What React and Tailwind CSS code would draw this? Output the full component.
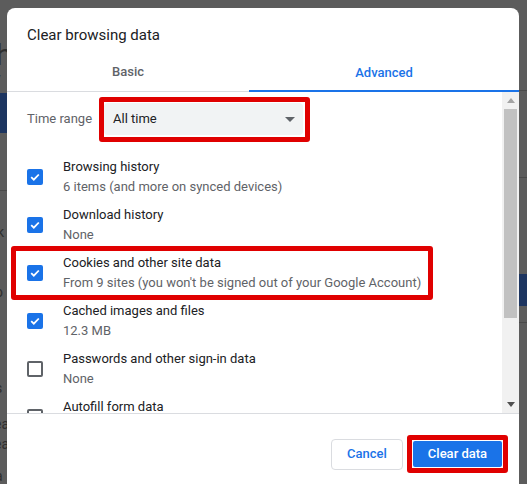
import React from "react";

function Check({ on }) {
  if (on) {
    return (
      <div className="w-4 h-4 rounded-[2px] bg-[#1a73e8] flex items-center justify-center shrink-0">
        <svg width="12" height="12" viewBox="0 0 12 12">
          <path d="M2.2 6.2 L4.8 8.7 L9.8 3.5" fill="none" stroke="white" strokeWidth="1.8" />
        </svg>
      </div>
    );
  }
  return <div className="w-4 h-4 rounded-[2px] border-2 border-[#5f6368] shrink-0" />;
}

function Row({ on, title, sub, highlight }) {
  return (
    <div className="relative flex items-center h-10 shrink-0">
      <div className="w-[36px] flex items-center">
        <Check on={on} />
      </div>
      <div className="flex flex-col">
        <div className="text-[13px] leading-5 text-[#202124]">{title}</div>
        <div className="text-[13px] leading-5 text-[#5f6368] h-5">{sub}</div>
      </div>
      {highlight && (
        <div className="absolute left-[-16px] top-[-7px] w-[422px] h-[54px] border-[5px] border-[#e00000] rounded-[3px]" />
      )}
    </div>
  );
}

export default function App() {
  return (
    <div
      className="relative w-[527px] h-[484px] overflow-hidden bg-[#5c5c5c]"
      style={{ fontFamily: "Roboto, 'Liberation Sans', sans-serif" }}
    >
      {/* dimmed page behind */}
      <div className="absolute inset-0 text-[#2e2e2e]">
        <div className="absolute left-[-14px] top-[40px] text-[30px] leading-none">th</div>
        <div className="absolute left-[-6px] top-[68px] text-[14px]">y</div>
        <div className="absolute left-0 top-[93px] w-[7px] h-[40px] bg-[#1d3560]" />
        <div className="absolute left-0 top-[190px] w-[7px] h-px bg-[#4a4a4a]" />
        <div className="absolute left-[-3px] top-[222px] text-[14px]">k</div>
        <div className="absolute left-[-5px] top-[282px] text-[14px]">o</div>
        <div className="absolute left-[-5px] top-[378px] text-[14px]">s</div>
        <div className="absolute left-[-6px] top-[414px] text-[14px]">ea</div>
        <div className="absolute left-[-6px] top-[434px] text-[14px]">ea</div>
        <div className="absolute left-[-5px] top-[466px] text-[14px]">a</div>
        <div className="absolute right-0 top-[90px] w-[8px] h-px bg-[#4a4a4a]" />
        <div className="absolute right-0 top-[177px] w-[8px] h-px bg-[#4a4a4a]" />
        <div className="absolute right-0 top-[274px] w-[8px] h-[32px] bg-[#1d3560]" />
        <div className="absolute right-0 top-[322px] w-[8px] h-px bg-[#4a4a4a]" />
      </div>

      {/* dialog */}
      <div className="absolute left-[7px] top-[8px] w-[512px] h-[500px] bg-white rounded-t-lg flex flex-col">
        <div className="pl-5 pt-[17px] h-[47px] text-[15px] leading-5 text-[#202124]">Clear browsing data</div>
        <div className="flex h-[37px] border-b border-[#dadce0]">
          <div className="w-[242px] flex items-center justify-center pb-[2px] text-[13px] font-medium text-[#5f6368]">Basic</div>
          <div className="flex-1 flex items-center justify-center text-[13px] font-medium text-[#1a73e8] border-b-2 border-[#1a73e8] mb-[-1px]">
            Advanced
          </div>
        </div>

        <div className="flex h-[322px] border-b border-[#dadce0]">
          <div className="flex-1 overflow-hidden pl-5 pt-[11px]">
            <div className="relative flex items-center h-8">
              <div className="w-[77px] text-[13px] text-[#5f6368]">Time range</div>
              <div className="w-[199px] h-8 bg-[#f1f3f4] rounded-[4px] flex items-center justify-between pl-[9px] pr-[8px] text-[13px] text-[#202124]">
                <span>All time</span>
                <svg width="10" height="5" viewBox="0 0 10 5">
                  <path d="M0 0 L10 0 L5 5 Z" fill="#5f6368" />
                </svg>
              </div>
              <div className="absolute left-[72px] top-[-6px] w-[211px] h-[45px] border-[5px] border-[#e00000] rounded-[3px]" />
            </div>
            <div className="flex flex-col gap-2 mt-[22px]">
              <Row on title="Browsing history" sub="6 items (and more on synced devices)" />
              <Row on title="Download history" sub="None" />
              <Row on highlight title="Cookies and other site data" sub="From 9 sites (you won't be signed out of your Google Account)" />
              <Row on title="Cached images and files" sub="12.3 MB" />
              <Row title="Passwords and other sign-in data" sub="None" />
              <Row title="Autofill form data" sub="" />
            </div>
          </div>
          <div className="w-[17px] bg-[#f1f1f1] flex flex-col items-center">
            <div className="h-[17px] flex items-center justify-center">
              <svg width="8" height="5" viewBox="0 0 8 5"><path d="M0 5 L8 5 L4 0 Z" fill="#a3a3a3" /></svg>
            </div>
            <div className="w-[13px] h-[209px] bg-[#c1c1c1]" />
            <div className="flex-1" />
            <div className="h-[17px] flex items-center justify-center">
              <svg width="8" height="5" viewBox="0 0 8 5"><path d="M0 0 L8 0 L4 5 Z" fill="#505050" /></svg>
            </div>
          </div>
        </div>

        <div className="flex justify-end items-center pt-[21px] pr-[11px] gap-[4px]">
          <button className="w-[72px] h-[31px] rounded-[4px] border border-[#dadce0] bg-white text-[13px] font-medium text-[#1a73e8]">
            Cancel
          </button>
          <div className="border-[5px] border-[#e00000] rounded-[3px] p-px">
            <button className="w-[89px] h-[26px] rounded-[2px] bg-[#1a73e8] text-[13px] font-medium text-white">
              Clear data
            </button>
          </div>
        </div>
      </div>
    </div>
  );
}
